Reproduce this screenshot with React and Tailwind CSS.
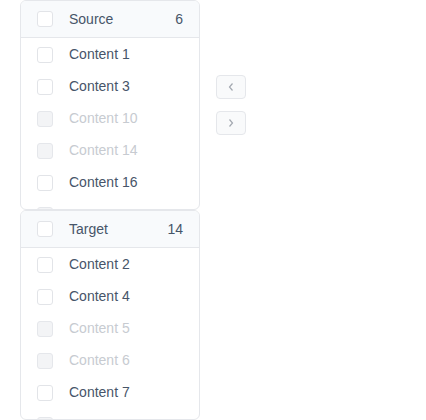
import React from "react";

const source = [
  { label: "Content 1" },
  { label: "Content 3" },
  { label: "Content 10", disabled: true },
  { label: "Content 14", disabled: true },
  { label: "Content 16" },
  { label: "Content 18", disabled: true },
];

const target = [
  { label: "Content 2" },
  { label: "Content 4" },
  { label: "Content 5", disabled: true },
  { label: "Content 6", disabled: true },
  { label: "Content 7" },
  { label: "Content 8", disabled: true },
  { label: "Content 9" },
];

const Box = ({ disabled }) => (
  <span
    className={`w-4 h-4 rounded-[3px] border shrink-0 ${
      disabled ? "bg-[#f3f4f6] border-[#e5e7eb]" : "bg-white border-[#e2e4e8]"
    }`}
  />
);

const Panel = ({ title, count, items }) => (
  <div className="w-[180px] h-[210px] border border-[#e5e7eb] rounded-[6px] bg-white overflow-hidden flex flex-col">
    <div className="h-[37px] shrink-0 bg-[#f8fafc] border-b border-[#e5e7eb] flex items-center pl-4 pr-4">
      <Box />
      <span className="ml-4 text-[#475569]">{title}</span>
      <span className="ml-auto text-[#475569]">{count}</span>
    </div>
    <div className="flex-1 overflow-hidden">
      {items.map((it) => (
        <div key={it.label} className="h-8 flex items-center pl-4 pt-px">
          <Box disabled={it.disabled} />
          <span className={`ml-4 ${it.disabled ? "text-[#c7cbd1]" : "text-[#475569]"}`}>
            {it.label}
          </span>
        </div>
      ))}
    </div>
  </div>
);

const Arrow = ({ dir }) => (
  <button className="w-[30px] h-6 rounded-[4px] border border-[#e5e7eb] bg-[#f9fafb] flex items-center justify-center">
    <svg width="8" height="10" viewBox="0 0 8 10" fill="none" stroke="#a3a8b0" strokeWidth="1.2">
      {dir === "left" ? <path d="M5.5 1.5L2.5 5l3 3.5" /> : <path d="M2.5 1.5L5.5 5l-3 3.5" />}
    </svg>
  </button>
);

export default function App() {
  return (
    <div
      className="w-[426px] h-[420px] bg-white pl-5 flex flex-wrap items-start text-[14px]"
      style={{ fontFamily: '"Liberation Sans", Arial, sans-serif' }}
    >
      <Panel title="Source" count="6" items={source} />
      <div className="mx-4 h-[210px] flex flex-col justify-center gap-3">
        <Arrow dir="left" />
        <Arrow dir="right" />
      </div>
      <Panel title="Target" count="14" items={target} />
    </div>
  );
}
